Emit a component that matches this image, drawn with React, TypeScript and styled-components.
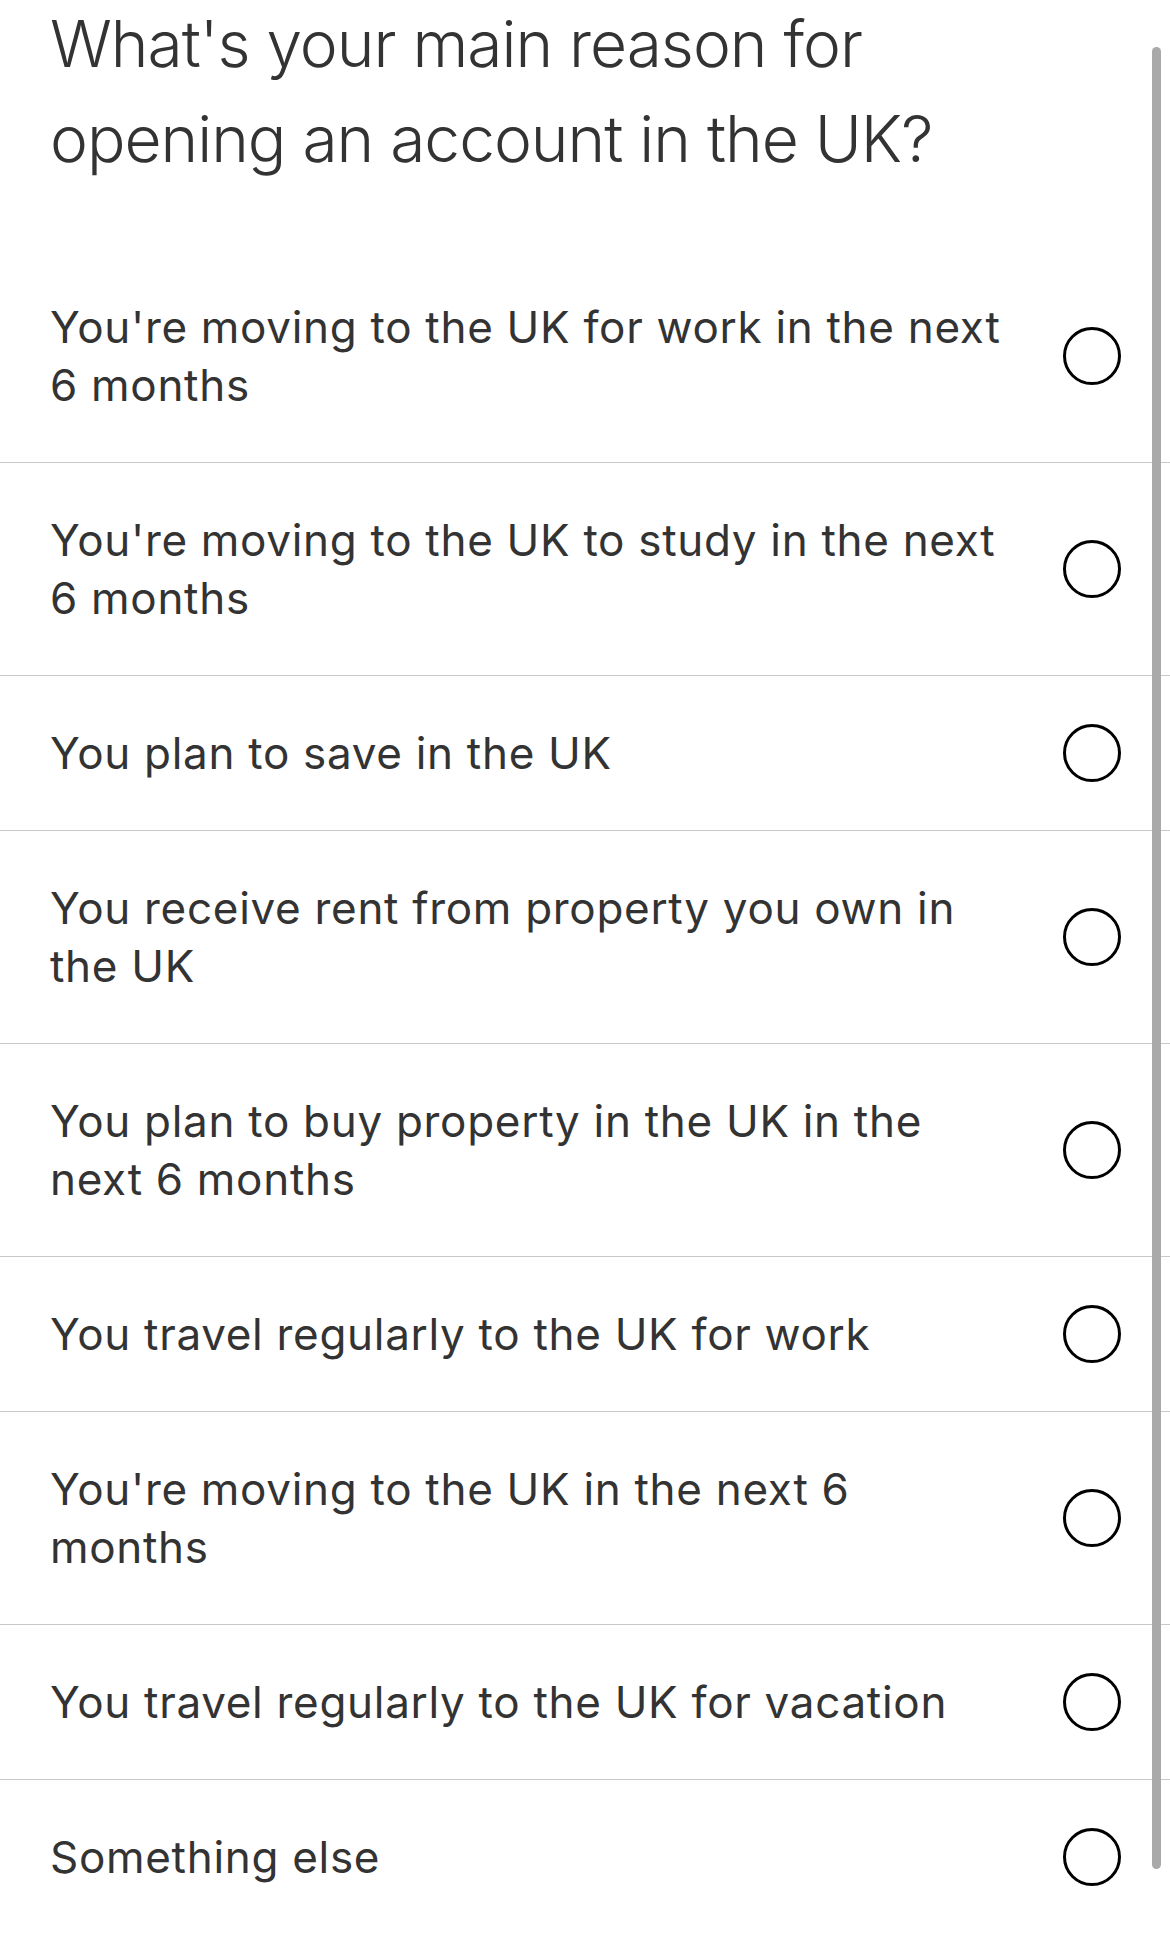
import React from "react";
import styled, { createGlobalStyle } from "styled-components";

const GlobalStyle = createGlobalStyle`
  html, body {
    margin: 0;
    padding: 0;
    background: #ffffff;
  }
  body {
    font-family: Inter, "Noto Sans", "Liberation Sans", sans-serif;
    color: #333333;
  }
`;

const Screen = styled.main`
  position: relative;
  width: 1170px;
  height: 1955px;
  background: #ffffff;
  overflow: hidden;
`;

const Title = styled.h1`
  margin: -4px 0 0 0;
  padding: 0 50px;
  height: 254px;
  box-sizing: border-box;
  font-family: Inter, "Liberation Sans", sans-serif;
  font-weight: 300;
  font-size: 64px;
  line-height: 95px;
  letter-spacing: -1px;
  color: #333333;
`;

const OptionList = styled.ul`
  list-style: none;
  margin: 0;
  padding: 0;
`;

const OptionRow = styled.li<{ $last?: boolean }>`
  display: flex;
  align-items: center;
  gap: 12px;
  padding: 48px 49px 48px 50px;
  border-bottom: ${(p) => (p.$last ? "none" : "1.5px solid #c9c9c9")};
`;

const OptionLabel = styled.span`
  flex: none;
  width: 960px;
  font-family: Inter, "Liberation Sans", sans-serif;
  font-weight: 400;
  font-size: 44px;
  line-height: 58px;
  letter-spacing: 0.7px;
  color: #333333;
`;

const Radio = styled.span`
  flex: none;
  margin-left: auto;
  width: 58px;
  height: 58px;
  box-sizing: border-box;
  border: 3px solid #000000;
  border-radius: 50%;
`;

const ScrollThumb = styled.div`
  position: absolute;
  top: 47px;
  left: 1152px;
  width: 9px;
  height: 1822px;
  border-radius: 5px;
  background: #a9a9a9;
`;

const options = [
  "You're moving to the UK for work in the next 6 months",
  "You're moving to the UK to study in the next 6 months",
  "You plan to save in the UK",
  "You receive rent from property you own in the UK",
  "You plan to buy property in the UK in the next 6 months",
  "You travel regularly to the UK for work",
  "You're moving to the UK in the next 6 months",
  "You travel regularly to the UK for vacation",
  "Something else",
];

export default function App() {
  return (
    <>
      <GlobalStyle />
      <Screen>
        <Title>
          What's your main reason for
          <br />
          opening an account in the UK?
        </Title>
        <OptionList>
          {options.map((o, i) => (
            <OptionRow key={o} $last={i === options.length - 1}>
              <OptionLabel>{o}</OptionLabel>
              <Radio />
            </OptionRow>
          ))}
        </OptionList>
        <ScrollThumb />
      </Screen>
    </>
  );
}
